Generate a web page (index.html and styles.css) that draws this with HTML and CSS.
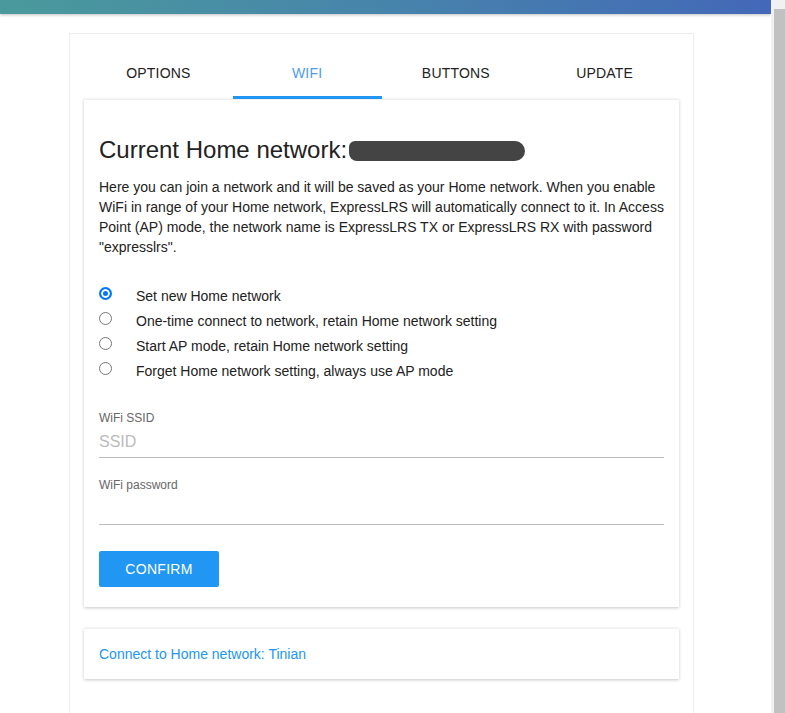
FILE: index.html
```html
<!DOCTYPE html>
<html>
<head>
<meta charset="utf-8">
<link rel="stylesheet" href="styles.css">
</head>
<body>
<div class="viewport">
  <div class="page">
    <header class="topbar"></header>
    <main class="outer">
      <nav class="tabs">
        <div class="tab">OPTIONS</div>
        <div class="tab active">WIFI</div>
        <div class="tab">BUTTONS</div>
        <div class="tab">UPDATE</div>
      </nav>
      <section class="card">
        <h2 class="title">Current Home network:<span class="redact"></span></h2>
        <p class="desc">Here you can join a network and it will be saved as your Home network. When you enable WiFi in range of your Home network, ExpressLRS will automatically connect to it. In Access Point (AP) mode, the network name is ExpressLRS TX or ExpressLRS RX with password "expresslrs".</p>
        <div class="radios">
          <label class="radio"><span class="dot checked"></span>Set new Home network</label>
          <label class="radio"><span class="dot"></span>One-time connect to network, retain Home network setting</label>
          <label class="radio"><span class="dot"></span>Start AP mode, retain Home network setting</label>
          <label class="radio"><span class="dot"></span>Forget Home network setting, always use AP mode</label>
        </div>
        <div class="field">
          <div class="flabel">WiFi SSID</div>
          <div class="finput placeholder">SSID</div>
        </div>
        <div class="field">
          <div class="flabel">WiFi password</div>
          <div class="finput"></div>
        </div>
        <button class="btn">CONFIRM</button>
      </section>
      <section class="card small">
        <a class="link">Connect to Home network: Tinian</a>
      </section>
    </main>
  </div>
  <div class="scrollbar"><div class="thumb"></div></div>
</div>
</body>
</html>
```

FILE: styles.css
```css
* { box-sizing: border-box; }
html, body { margin: 0; padding: 0; height: 713px; overflow: hidden; background: #fff; }
body { font-family: "Liberation Sans", Arial, sans-serif; color: #333; }
.viewport { display: flex; height: 713px; }
.page { flex: 1; min-width: 0; }
.scrollbar { width: 14px; background: #f1f1f1; padding: 9px 0 0 3px; }
.thumb { height: 100%; background: #c1c1c1; }
.topbar {
  height: 14px;
  background: linear-gradient(90deg, #4a9a9c 0%, #4784ab 50%, #4368b8 100%);
  box-shadow: 0 1px 3px rgba(0,0,0,.25);
}
.outer {
  width: 625px;
  margin: 19px 0 0 69px;
  border: 1px solid #ececec;
  border-bottom: none;
  padding: 15px 14px 40px;
  height: 720px;
}
.tabs { display: flex; height: 50px; }
.tab {
  flex: 1;
  display: flex; align-items: center; justify-content: center;
  font-size: 14px; color: #222;
  letter-spacing: 0.2px;
  padding-bottom: 3px;
}
.tab.active { color: #4c9cf0; border-bottom: 3px solid #2196f3; padding-bottom: 0; }
.card {
  background: #fff;
  box-shadow: 0 1px 3px rgba(0,0,0,.22);
  border-top: 1px solid #f0f0f0;
  padding: 35px 15px 20px;
}
.title {
  margin: 0;
  font-size: 24px; font-weight: normal; color: #222;
  line-height: 30px;
  display: flex; align-items: center;
}
.redact {
  display: inline-block;
  width: 176px; height: 20px;
  margin-left: 2px; margin-top: 2px;
  background: #444;
  border-radius: 6px 10px 10px 8px;
}
.desc { margin: 12px 0 0; font-size: 14px; line-height: 20px; color: #222; }
.radios { margin-top: 26px; display: flex; flex-direction: column; }
.radio { display: flex; align-items: center; height: 25px; font-size: 14px; color: #222; }
.dot {
  width: 13px; height: 13px; border-radius: 50%;
  border: 1px solid #767676; margin: 0 24px 0 0; background: #fff;
  flex: none; position: relative; top: -2px;
}
.dot.checked { border: 2px solid #0075ff; box-shadow: inset 0 0 0 2px #fff; background: #0075ff; }
.field { margin-top: 28px; }
.field + .field { margin-top: 20px; }
.flabel { font-size: 12px; color: #666; line-height: 14px; }
.finput { height: 33px; border-bottom: 1px solid #bbb; font-size: 16px; line-height: 30px; padding-top: 2px; }
.placeholder { color: #bbb; }
.btn {
  margin-top: 26px;
  width: 120px; height: 36px;
  background: #2196f3; color: #fff; border: none; border-radius: 2px;
  font-family: inherit; font-size: 14px; letter-spacing: 0.3px;
  display: block;
}
.card.small { margin-top: 21px; padding: 15px; }
.link { color: #2196f3; font-size: 14px; line-height: 20px; }
```
